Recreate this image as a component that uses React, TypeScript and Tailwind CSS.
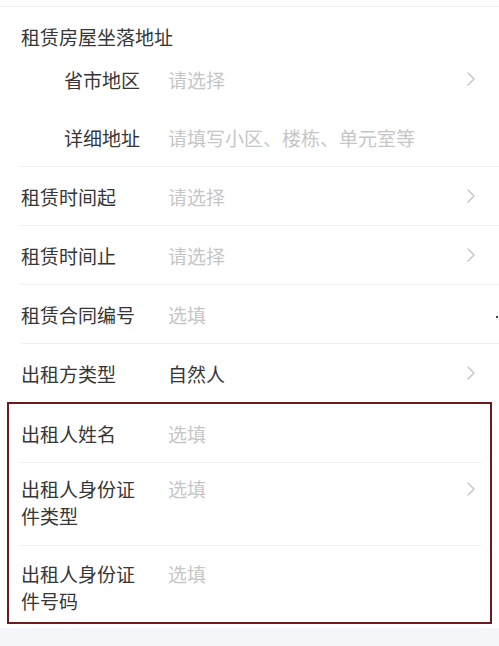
import React from 'react';

const font = { fontFamily: '"Noto Sans CJK SC", "Noto Sans", sans-serif' };

const Chevron = () => (
  <svg width="10" height="16" viewBox="0 0 10 16" className="shrink-0">
    <polyline points="2,2 8,8 2,14" fill="none" stroke="#c9c9c9" strokeWidth="1.6" strokeLinecap="round" strokeLinejoin="round" />
  </svg>
);

interface RowProps {
  label: string;
  value: string;
  filled?: boolean;
  arrow?: boolean;
}

const Row: React.FC<RowProps> = ({ label, value, filled, arrow }) => (
  <div className="flex h-[58px] items-center pl-[21px] pr-[23px]">
    <div className="w-[147px] shrink-0 text-[19px] leading-[27px] text-[#363636]">{label}</div>
    <div className={`flex-1 text-[19px] leading-[27px] ${filled ? 'text-[#363636]' : 'text-[#c6c6c6]'}`}>{value}</div>
    {arrow && <Chevron />}
  </div>
);

const SubRow: React.FC<RowProps> = ({ label, value, arrow }) => (
  <div className="flex h-[58px] items-center pr-[23px]">
    <div className="w-[168px] shrink-0 pl-[64px] text-[19px] leading-[27px] text-[#363636]">{label}</div>
    <div className="flex-1 text-[19px] leading-[27px] text-[#c6c6c6]">{value}</div>
    {arrow && <Chevron />}
  </div>
);

const Divider = () => <div className="ml-[21px] h-px bg-[#efefef]" />;

const BoxRow: React.FC<RowProps & { className?: string }> = ({ label, value, arrow, className }) => (
  <div className={`flex pr-[14px] ${className ?? ''}`}>
    <div className="w-[147px] shrink-0 pr-[20px] text-[19px] leading-[27px] text-[#363636]">{label}</div>
    <div className="flex-1 text-[19px] leading-[27px] text-[#c6c6c6]">{value}</div>
    {arrow && (
      <div className="flex h-[27px] items-center">
        <Chevron />
      </div>
    )}
  </div>
);

export default function App() {
  return (
    <div className="flex min-h-[646px] w-full flex-col bg-[#f4f6f9]" style={font}>
      <div className="bg-white">
        <div className="h-[7px] border-b border-[#f0f0f0] bg-[#fdfdfd]" />
        <div className="pl-[21px] pt-[20px] pb-[3px] text-[19px] leading-[20px] text-[#363636]">租赁房屋坐落地址</div>
        <SubRow label="省市地区" value="请选择" arrow />
        <SubRow label="详细地址" value="请填写小区、楼栋、单元室等" />
        <Divider />
        <Row label="租赁时间起" value="请选择" arrow />
        <Divider />
        <Row label="租赁时间止" value="请选择" arrow />
        <Divider />
        <div className="relative">
          <Row label="租赁合同编号" value="选填" />
          <span className="absolute right-[1px] top-[31px] h-[2px] w-[2px] rounded-full bg-black" />
        </div>
        <Divider />
        <Row label="出租方类型" value="自然人" filled arrow />

        <div className="mx-[7px] border-2 border-[#6e1a20] pl-[12px]">
          <BoxRow label="出租人姓名" value="选填" className="h-[58px] items-center" />
          <div className="mr-[9px] h-px bg-[#efefef]" />
          <BoxRow label="出租人身份证件类型" value="选填" arrow className="items-start pt-[12px] pb-[16px]" />
          <div className="mr-[9px] h-px bg-[#efefef]" />
          <BoxRow label="出租人身份证件号码" value="选填" className="items-start pt-[14px] pb-[8px]" />
        </div>
        <div className="h-[4px]" />
      </div>
      <div className="flex-1" />
    </div>
  );
}
